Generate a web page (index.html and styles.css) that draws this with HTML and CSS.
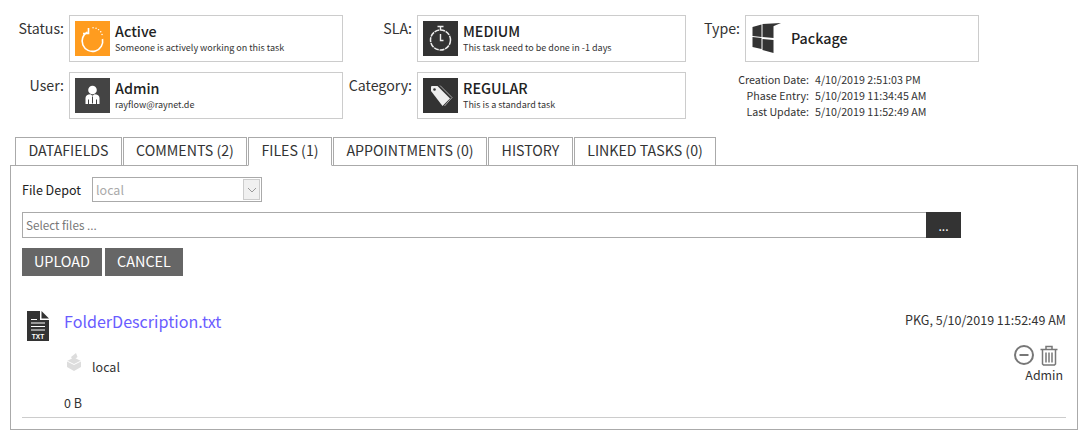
FILE: index.html
```html
<!DOCTYPE html>
<html lang="en">
<head>
<meta charset="utf-8">
<title>Task</title>
<link rel="stylesheet" href="styles.css">
</head>
<body>
<header class="summary">
  <div class="label">Status:</div>
  <div class="card">
    <div class="tile tile-orange">
      <svg viewBox="0 0 35 35" width="35" height="35"><path d="M12.500 11A10.300 10.300 0 1 0 27.500 18" fill="none" stroke="#fff" stroke-width="1.600"/><path d="M13.500 7v5.500H8" fill="none" stroke="#fff" stroke-width="1.600"/><path d="M18 6.800h.1M21 7.300h.1M23.500 8.600h.1M25.700 10.800h.1M27 13.500h.1" stroke="#fff" stroke-width="1.400" stroke-linecap="round"/></svg>
    </div>
    <div class="card-text"><div class="card-title">Active</div><div class="card-sub">Someone is actively working on this task</div></div>
  </div>
  <div class="label">SLA:</div>
  <div class="card">
    <div class="tile tile-dark">
      <svg viewBox="0 0 35 35" width="35" height="35"><circle cx="17.500" cy="19" r="10" fill="none" stroke="#eee" stroke-width="1.500" stroke-dasharray="5 .8"/><path d="M17.500 9V6M14.500 5.500h6M17.500 13v6.500h3" fill="none" stroke="#eee" stroke-width="1.400"/></svg>
    </div>
    <div class="card-text"><div class="card-title">MEDIUM</div><div class="card-sub">This task need to be done in -1 days</div></div>
  </div>
  <div class="label">Type:</div>
  <div class="card card-type">
    <svg class="package" viewBox="0 0 30 30" width="30" height="30"><path d="M.5 4 9.500 1.500V14L.5 13zM10.500 1 29 0l-6 2.500-1.500.800v11.700l-11-1zM.5 14l9 1V26L.5 24zM10.500 16l11 1V30l-11-3z" fill="#333"/></svg>
    <div class="card-title">Package</div>
  </div>

  <div class="label">User:</div>
  <div class="card">
    <div class="tile tile-grey">
      <svg viewBox="0 0 35 35" width="35" height="35"><circle cx="17.500" cy="12" r="4.300" fill="#fff"/><path d="M10.500 26v-6c0-2.500 2-3.500 5-3.800l2 1.500 2-1.500c3 .3 5 1.300 5 3.800v6z" fill="#fff"/><path d="M17.500 18.500v7M13.500 21.500v4.500M21.500 21.500v4.500" stroke="#444" stroke-width="1"/></svg>
    </div>
    <div class="card-text"><div class="card-title">Admin</div><div class="card-sub">rayflow@raynet.de</div></div>
  </div>
  <div class="label">Category:</div>
  <div class="card">
    <div class="tile tile-dark">
      <svg viewBox="0 0 35 35" width="35" height="35"><path d="M8 13V8.500L9 8h5.500L27 20.500 19.500 28z" fill="#eee"/><circle cx="11.500" cy="11.500" r="1.300" fill="#333"/><path d="M17 7.500 29 19.500 21.500 28" fill="none" stroke="#aaa" stroke-width="1"/></svg>
    </div>
    <div class="card-text"><div class="card-title">REGULAR</div><div class="card-sub">This is a standard task</div></div>
  </div>
  <dl class="dates">
    <dt>Creation Date:</dt><dd>4/10/2019 2:51:03 PM</dd>
    <dt>Phase Entry:</dt><dd>5/10/2019 11:34:45 AM</dd>
    <dt>Last Update:</dt><dd>5/10/2019 11:52:49 AM</dd>
  </dl>
</header>

<nav class="tabs">
  <a class="tab tab-1">DATAFIELDS</a>
  <a class="tab tab-2">COMMENTS (2)</a>
  <a class="tab tab-3 is-active">FILES (1)</a>
  <a class="tab tab-4">APPOINTMENTS (0)</a>
  <a class="tab tab-5">HISTORY</a>
  <a class="tab tab-6">LINKED TASKS (0)</a>
</nav>

<main class="panel">
  <div class="depot-row">
    <span class="depot-label">File Depot</span>
    <div class="select">
      <span class="select-value">local</span>
      <span class="select-arrow"><svg viewBox="0 0 10 6" width="10" height="6"><path d="M1 1l4 4 4-4" fill="none" stroke="#999" stroke-width="1"/></svg></span>
    </div>
  </div>
  <div class="file-input">
    <span class="file-placeholder">Select files ...</span>
    <span class="browse">...</span>
  </div>
  <div class="buttons">
    <button class="btn btn-upload">UPLOAD</button>
    <button class="btn btn-cancel">CANCEL</button>
  </div>

  <section class="file">
    <svg class="file-icon" viewBox="0 0 22 30" width="22" height="30"><path d="M0 0h13v9h9v21H0z" fill="#333"/><path d="M14.500 0 22 7.500h-7.500z" fill="#333"/><path d="M4 8.500h6M4 12h14M4 15.500h14M4 19h14" stroke="#fff" stroke-width="1"/><text x="11" y="27.500" class="file-ext" text-anchor="middle">TXT</text></svg>
    <div class="file-main">
      <a class="file-name">FolderDescription.txt</a>
      <div class="file-depot">
        <svg viewBox="0 0 16 18" width="16" height="18"><path d="M1 8l7-3.500L15 8v6l-7 4-7-4z" fill="#ddd"/><path d="M5 4l5-4 1.500 4L7 7.500z" fill="#ddd"/><path d="M1 8l7 3.500L15 8" fill="none" stroke="#fff" stroke-width="1"/></svg>
        <span>local</span>
      </div>
      <div class="file-size">0 B</div>
    </div>
    <div class="file-side">
      <div class="file-meta">PKG, 5/10/2019 11:52:49 AM</div>
      <div class="file-actions">
        <svg viewBox="0 0 22 22" width="22" height="22"><circle cx="11" cy="11" r="9" fill="none" stroke="#777" stroke-width="2"/><path d="M6.500 11h9" stroke="#777" stroke-width="2"/></svg>
        <svg viewBox="0 0 18 21" width="18" height="21"><path d="M.5 4.500h17M6 4V1.500h6V4M2.500 4.500v14.500l1 1h11l1-1V4.500M6 7.500v10M9 7.500v10M12 7.500v10" fill="none" stroke="#777" stroke-width="1.500"/></svg>
      </div>
      <div class="file-user">Admin</div>
    </div>
  </section>
</main>
</body>
</html>
```

FILE: styles.css
```css
* { box-sizing: border-box; }
html, body { margin: 0; padding: 0; background: #fff; }
body {
  width: 1088px;
  height: 440px;
  overflow: hidden;
  font-family: "Noto Sans CJK SC", "Noto Sans", sans-serif;
  color: #333;
  font-size: 12.500px;
  line-height: 18px;
}
.summary {
  display: grid;
  grid-template-columns: 64px 279px 69px 274px 54px 239px;
  grid-template-rows: 47px 47px;
  row-gap: 10px;
  padding-top: 15px;
}
.summary .card { margin-left: 5px; }
.label {
  text-align: right;
  font-size: 14.200px;
  line-height: 20px;
  padding-top: 3px;
}
.card {
  display: flex;
  align-items: center;
  border: 1px solid #ccc;
  padding: 0 5px;
  background: #fff;
}
.tile { width: 35px; height: 35px; flex: none; }
.tile svg { display: block; }
.tile-orange { background: #ff9c1f; }
.tile-dark { background: #333; }
.tile-grey { background: #444; }
.card-text { margin-left: 5px; margin-top: -2px; }
.card-title { font-size: 14.300px; font-weight: 500; line-height: 20px; color: #222; }
.card-sub { font-size: 9px; line-height: 13px; color: #333; }
.card-type { padding-left: 6px; }
.card-type .card-title { margin-top: -2px; }
.package { flex: none; margin-right: 9px; margin-top: -1px; }
.dates {
  grid-column: 5 / 7;
  margin: 0;
  display: grid;
  grid-template-columns: 123px auto;
  grid-auto-rows: 16px;
  column-gap: 6px;
  font-size: 10.700px;
  line-height: 16px;
  align-self: start;
}
.dates dt { text-align: right; }
.dates dd { margin: 0; }
.tabs {
  display: flex;
  height: 28px;
  margin-top: 18px;
  padding-left: 15px;
  gap: 1px;
  position: relative;
  z-index: 1;
}
.tab {
  display: block;
  height: 29px;
  border: 1px solid #aaa;
  background: #fff;
  font-size: 14.200px;
  line-height: 24px;
  text-align: center;
}
.tab.is-active { border-bottom-color: #fff; }
.tab-1 { width: 107px; }
.tab-2 { width: 124px; }
.tab-3 { width: 84px; }
.tab-4 { width: 154px; }
.tab-5 { width: 85px; }
.tab-6 { width: 142px; }
.panel {
  width: 1068px;
  height: 265px;
  margin-left: 10px;
  border: 1px solid #aaa;
  padding: 11px 11px 0;
}
.depot-row { display: flex; align-items: center; height: 25px; }
.depot-label { width: 70px; color: #222; }
.select {
  width: 170px;
  height: 25px;
  border: 1px solid #aaa;
  display: flex;
  align-items: center;
  justify-content: space-between;
  padding: 1px;
}
.select-value { color: #aaa; padding-left: 2px; }
.select-arrow {
  width: 17px;
  height: 21px;
  background: #f0f0f0;
  border: 1px solid #ccc;
  display: flex;
  align-items: center;
  justify-content: center;
}
.file-input {
  display: flex;
  justify-content: space-between;
  width: 939px;
  height: 26px;
  margin-top: 10px;
  border: 1px solid #aaa;
  border-right: 0;
}
.file-placeholder { padding-left: 3px; font-size: 11.700px; line-height: 24px; color: #777; }
.browse {
  width: 35px;
  height: 26px;
  margin-top: -1px;
  background: #333;
  color: #fff;
  text-align: center;
  font-size: 12px;
  line-height: 28px;
}
.buttons { display: flex; gap: 3px; margin-top: 10px; }
.btn {
  height: 28px;
  border: 0;
  padding: 0 0 2px;
  background: #666;
  color: #fff;
  font: inherit;
  font-size: 14.400px;
  line-height: 26px;
}
.btn-upload { width: 80px; }
.btn-cancel { width: 78px; }
.file {
  display: flex;
  height: 107px;
  margin-top: 35px;
  border-bottom: 1px solid #ccc;
}
.file-icon { flex: none; margin-left: 5px; margin-right: 15px; }
.file-ext { font-size: 6.500px; font-weight: 700; fill: #fff; font-family: "Liberation Sans", sans-serif; }
.file-main { flex: 1; }
.file-name { display: block; font-size: 16.100px; line-height: 20px; color: #6a5cff; }
.file-depot { display: flex; align-items: flex-start; margin-top: 22px; margin-left: 2px; }
.file-depot span { margin-left: 10px; line-height: 18px; margin-top: 5px; }
.file-size { margin-top: 19px; font-size: 12.500px; line-height: 16px; }
.file-side { display: flex; flex-direction: column; align-items: flex-end; }
.file-meta { font-size: 12.500px; line-height: 18px; }
.file-actions { display: flex; align-items: center; gap: 5px; margin-top: 15px; padding-right: 8px; }
.file-actions svg { display: block; }
.file-user { font-size: 12.400px; line-height: 16px; padding-right: 3px; margin-top: 1px; }
```
